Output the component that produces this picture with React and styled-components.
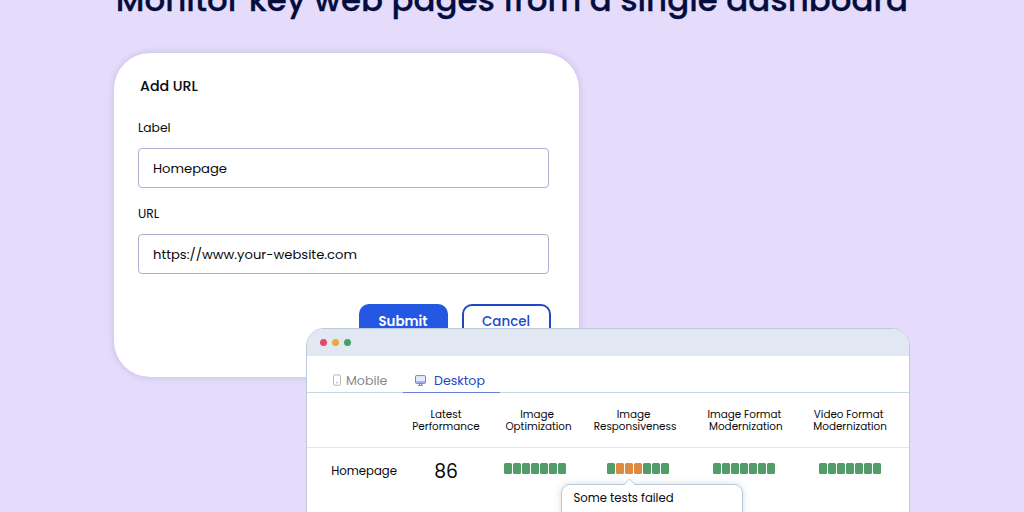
import React from 'react'

import styled, { createGlobalStyle } from 'styled-components';

const GlobalStyle = createGlobalStyle`
     * {
          box-sizing: border-box;
     }
     body {
          margin: 0;
          background: #e5dcfb;
          font-family: Poppins, Inter, sans-serif;
          color: #08090b;
     }
`;

const Page = styled.main`
     position: relative;
     width: 1024px;
     height: 512px;
     overflow: hidden;
     background: #e5dcfb;
`;

const Headline = styled.h1`
     margin: -20px 0 0;
     height: 73px;
     text-align: center;
     white-space: nowrap;
     font-size: 32.5px;
     font-weight: 500;
     line-height: 40px;
     color: #040d3d;
     -webkit-text-stroke: 0.3px #040d3d;
`;

const Card = styled.form`
     display: flex;
     flex-direction: column;
     width: 465px;
     height: 324px;
     margin-left: 114px;
     padding: 23px 30px 0 24px;
     border-radius: 36px;
     background: #fff;
     box-shadow: 0 0 7px rgba(70, 50, 120, 0.2);
`;

const CardTitle = styled.h2`
     margin: 0 0 23px 2px;
     font-size: 14.2px;
     font-weight: 500;
     line-height: 20px;
`;

const Field = styled.label`
     display: flex;
     flex-direction: column;
     gap: 11px;
     height: 86px;
     font-size: 12.3px;
     line-height: 18px;
`;

const FieldBox = styled.span`
     display: flex;
     align-items: center;
     height: 40px;
     padding: 2px 0 0 14px;
     border: 1px solid #acb1d0;
     border-radius: 4px;
     font-size: 13.15px;
`;

const Actions = styled.div`
     display: flex;
     justify-content: flex-end;
     gap: 14px;
     margin: 12.5px -1.5px 0 0;
`;

const Button = styled.button`
     width: 89px;
     height: 36px;
     padding: 0;
     border: 2px solid ${({ $primary }) => $primary ? '#2457e2' : '#2048c4'};
     border-radius: 10px;
     background: ${({ $primary }) => $primary ? '#2457e2' : '#fff'};
     color: ${({ $primary }) => $primary ? '#fff' : '#2048c4'};
     font-family: inherit;
     font-size: 13.4px;
     font-weight: ${({ $primary }) => $primary ? 600 : 500};
`;

// the browser window sits on top of the card
const Window = styled.section`
     position: absolute;
     left: 306px;
     top: 328px;
     width: 604px;
     height: 220px;
     overflow: hidden;
     border: 1px solid #bdcade;
     border-radius: 18px 18px 0 0;
     background: #fff;
`;

const TitleBar = styled.header`
     display: flex;
     align-items: center;
     gap: 4.8px;
     height: 27px;
     padding-left: 13px;
     background: #e1e8f2;
`;

const Dot = styled.span`
     width: 7px;
     height: 7px;
     border-radius: 50%;
     background: ${({ $color }) => $color};
`;

const Tabs = styled.nav`
     display: flex;
     height: 37px;
     padding-left: 26px;
     border-bottom: 1px solid #c8d8e2;
`;

const Tab = styled.div`
     display: flex;
     align-items: center;
     gap: ${({ $active }) => $active ? '8px' : '5px'};
     width: ${({ $active }) => $active ? '97px' : '70px'};
     height: 37px;
     padding: 14px 0 0 ${({ $active }) => $active ? '12px' : '0'};
     border-bottom: 1px solid ${({ $active }) => $active ? '#6580d6' : 'transparent'};
     font-size: 12.6px;
     line-height: 20px;
     color: ${({ $active }) => $active ? '#2048c4' : '#87888d'};

     svg {
          margin-bottom: 2px;
     }
`;

const HeadRow = styled.div`
     display: grid;
     grid-template-columns: 92px 94px 91px 102px 119.6px 89px;
     align-items: center;
     justify-items: center;
     height: 55px;
     padding-top: 2px;
     border-bottom: 1px solid #dfe9ec;
     font-size: 10.4px;
     line-height: 12.4px;
     text-align: center;
     white-space: pre;
`;

const BodyRow = styled.div`
     display: grid;
     grid-template-columns: 92px 94px 83px 123.4px 90.2px 120.8px;
     align-items: center;
     justify-items: center;
     height: 43px;
`;

const PageName = styled.span`
     justify-self: end;
     margin: 2px 2px 0 0;
     font-size: 11.7px;
     line-height: 18px;
`;

const Score = styled.span`
     margin-top: 5px;
     font-size: 18.7px;
     line-height: 24px;
`;

const Bars = styled.div`
     display: flex;
     gap: 1px;
     margin-bottom: 2px;
`;

const Bar = styled.i`
     width: 8px;
     height: 11px;
     border-radius: 1.5px;
     background: ${({ $failed }) => $failed ? '#de8b42' : '#519c68'};
`;

const Tooltip = styled.div`
     position: absolute;
     left: 254px;
     top: 155px;
     width: 182px;
     height: 60px;
     padding: 4px 0 0 11.5px;
     border: 1px solid #bccbdc;
     border-radius: 9px;
     background: #fff;
     box-shadow: 0 0 6px rgba(60, 80, 110, 0.22);
     font-size: 11.65px;
     line-height: 18px;
`;

const Arrow = styled.svg`
     position: absolute;
     left: 61px;
     top: -7px;
     width: 13px;
     height: 8px;
`;

const columns = [
     'Latest\nPerformance',
     'Image \nOptimization',
     'Image \nResponsiveness',
     'Image Format \nModernization',
     'Video Format \nModernization',
];

const results = [
     [0, 0, 0, 0, 0, 0, 0],
     [0, 1, 1, 1, 0, 0, 0],
     [0, 0, 0, 0, 0, 0, 0],
     [0, 0, 0, 0, 0, 0, 0],
];

function PhoneIcon() {
  return (
     <svg width="8" height="12" viewBox="0 0 8 12" fill="none" stroke="#a5a6aa" strokeWidth="0.8">
          <rect x="0.5" y="0.9" width="7" height="10.4" rx="1.2"/>
          <circle cx="4" cy="8.8" r="0.4" fill="#87888d"/>
     </svg>
  )
}

function DesktopIcon() {
  return (
     <svg width="11" height="11" viewBox="0 0 11 11" fill="none" stroke="#5b77d6" strokeWidth="0.9">
          <rect x="0.5" y="0.6" width="10" height="7.8" rx="1" fill="#e6ebfa"/>
          <path d="M0.5 7h10M4.4 8.4v1.8M6.6 8.4v1.8M3 10.3h5"/>
     </svg>
  )
}

function AddUrl() {
  return (
     <Card>
          <CardTitle>Add URL</CardTitle>
          <Field>
               Label
               <FieldBox>Homepage</FieldBox>
          </Field>
          <Field>
               URL
               <FieldBox>https://www.your-website.com</FieldBox>
          </Field>
          <Actions>
               <Button type="button" $primary>Submit</Button>
               <Button type="button">Cancel</Button>
          </Actions>
     </Card>
  )
}

function Dashboard() {
  return (
     <Window>
          <TitleBar>
               <Dot $color="#dd4b68"/>
               <Dot $color="#e9a93c"/>
               <Dot $color="#469f66"/>
          </TitleBar>
          <Tabs>
               <Tab><PhoneIcon/>Mobile</Tab>
               <Tab $active><DesktopIcon/>Desktop</Tab>
          </Tabs>
          <HeadRow>
               <span/>
               {columns.map((name) => <span key={name}>{name}</span>)}
          </HeadRow>
          <BodyRow>
               <PageName>Homepage</PageName>
               <Score>86</Score>
               {results.map((bars, i) => (
                    <Bars key={i}>
                         {bars.map((failed, j) => <Bar key={j} $failed={failed}/>)}
                    </Bars>
               ))}
          </BodyRow>
          <Tooltip>
               <Arrow viewBox="0 0 13 8">
                    <path d="M0.5 7.5L6.5 1l6 6.5V8h-12z" fill="#fff"/>
                    <path d="M0.5 7.2L6.5 1l6 6.2" fill="none" stroke="#bccbdc"/>
               </Arrow>
               Some tests failed
          </Tooltip>
     </Window>
  )
}

function App() {

  return (
     <>
          <GlobalStyle/>
          <Page>
               <Headline>Monitor key web pages from a single dashboard</Headline>
               <AddUrl/>
               <Dashboard/>
          </Page>
     </>
     )
}

export default App
